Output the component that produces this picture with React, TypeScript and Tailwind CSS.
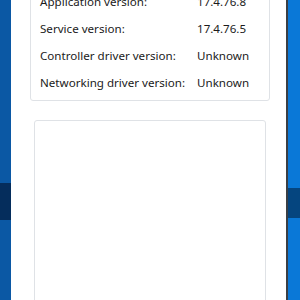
import React from "react";

const rows: [string, string][] = [
  ["Application version:", "17.4.76.8"],
  ["Service version:", "17.4.76.5"],
  ["Controller driver version:", "Unknown"],
  ["Networking driver version:", "Unknown"],
];

export default function App() {
  return (
    <div className="w-[300px] h-[300px] overflow-hidden flex bg-white" style={{ fontFamily: '"Segoe UI", "Noto Sans", sans-serif' }}>
      <div className="w-[11px] h-full flex flex-col bg-[#0b58a4]">
        <div className="h-[183px]" />
        <div className="h-[37px] bg-[#052d5c]" />
        <div className="flex-1" />
      </div>
      <div className="flex-1 h-full flex flex-col bg-white">
        <div className="ml-[19px] w-[240px] mt-[-13px] h-[114px] border border-[#dfe2e6] rounded-[3px] bg-white pl-[9px] flex flex-col">
          {rows.map(([k, v]) => (
            <div key={k} className="h-[27px] flex items-center text-[11.6px] text-[#1b1b1b]">
              <div className="w-[157px] shrink-0">{k}</div>
              <div>{v}</div>
            </div>
          ))}
        </div>
        <div className="ml-[23px] w-[232px] mt-[19px] flex-1 mb-[-10px] border border-[#dfe2e6] rounded-[3px] bg-white" />
      </div>
      <div className="w-[2px] h-full bg-[#3a3f45]" />
      <div className="w-[12px] h-full flex flex-col bg-[#0a78d7]">
        <div className="h-[188px]" />
        <div className="h-[30px] bg-[#05457f]" />
        <div className="flex-1" />
      </div>
    </div>
  );
}
